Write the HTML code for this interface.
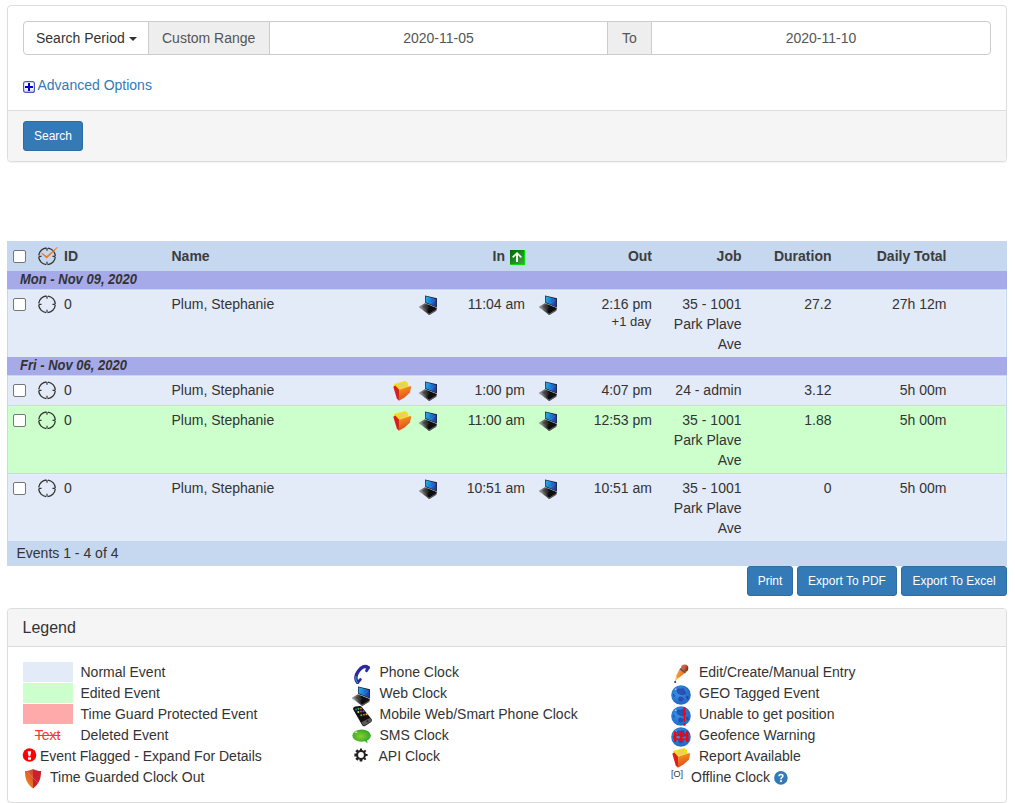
<!DOCTYPE html>
<html><head><meta charset="utf-8">
<style>
*{box-sizing:border-box;margin:0;padding:0}
html,body{width:1015px;height:803px;overflow:hidden;background:#fff}
body{font-family:"Liberation Sans",sans-serif;font-size:14px;color:#333;position:relative}
.a{position:absolute}
.t{position:absolute;white-space:nowrap;line-height:20px}
.r{text-align:right}
.b{font-weight:bold;color:#3c3c3c}
.panel{position:absolute;border:1px solid #ddd;border-radius:4px;background:#fff;box-shadow:0 1px 1px rgba(0,0,0,.05)}
.ig{position:absolute;top:21px;height:34px;border:1px solid #ccc;background:#fff}
.addon{background:#eee;color:#555}
.btn{position:absolute;background:#337ab7;border:1px solid #2e6da4;border-radius:3px;color:#fff;font-size:12px;line-height:28px;text-align:center}
.row{position:absolute;left:7px;width:1000px}
.hd{background:#c5d8ef}
.dt{background:#a6aae8}
.nm{background:#e3eaf8;border-left:1px solid #c5d8ef;border-right:1px solid #c5d8ef;border-top:1px solid #c5d8ef;box-shadow:inset 0 1px 0 rgba(255,255,255,.15),inset -1px 0 0 rgba(255,255,255,.15)}
.gr{background:#ccffcc;border-left:1px solid #c5d8ef;border-right:1px solid #c5d8ef;border-top:1px solid #c5d8ef;box-shadow:inset 0 1px 0 rgba(255,255,255,.15),inset -1px 0 0 rgba(255,255,255,.15)}
.cb{position:absolute;left:13px;width:13px;height:13px;border:1px solid #767676;border-radius:2px;background:#fff}
.dtt{position:absolute;left:20px;font-size:13px;font-weight:bold;font-style:italic;line-height:18px;white-space:nowrap;transform:scaleY(1.12);transform-origin:0 4px}
</style></head><body>

<svg width="0" height="0" style="position:absolute">
<defs>
<linearGradient id="scr" x1="0" y1="0" x2="1" y2="0.3"><stop offset="0" stop-color="#28b0ee"/><stop offset="0.45" stop-color="#1e88d8"/><stop offset="1" stop-color="#2040b0"/></linearGradient>
<linearGradient id="kb" x1="0" y1="0" x2="1" y2="0"><stop offset="0" stop-color="#a8a8a8"/><stop offset="0.35" stop-color="#555"/><stop offset="0.55" stop-color="#0a0a0a"/><stop offset="1" stop-color="#151515"/></linearGradient>
<linearGradient id="fold" x1="0" y1="0" x2="0.3" y2="1"><stop offset="0" stop-color="#f8a020"/><stop offset="1" stop-color="#e04818"/></linearGradient>
<linearGradient id="shl" x1="0" y1="1" x2="0.6" y2="0"><stop offset="0" stop-color="#f4a020"/><stop offset="1" stop-color="#d84a30"/></linearGradient>
<radialGradient id="glb" cx="0.4" cy="0.4" r="0.7"><stop offset="0" stop-color="#3a9ae8"/><stop offset="0.8" stop-color="#2468c8"/><stop offset="1" stop-color="#3a90e0"/></radialGradient>
<radialGradient id="sms" cx="0.45" cy="0.55" r="0.6"><stop offset="0" stop-color="#8acc30"/><stop offset="1" stop-color="#28a828"/></radialGradient>
<symbol id="clk" viewBox="0 0 20 20">
  <circle cx="9" cy="9.3" r="8.3" fill="none" stroke="#333" stroke-width="1.3" stroke-dasharray="11.538 1.5" stroke-dashoffset="12.288"/>
  <path d="M9 1v2.8M9 17.6v-2.8M0.7 9.3h2.8M17.3 9.3h-2.8" stroke="#333" stroke-width="1.2"/>
</symbol>
<symbol id="lap" viewBox="0 0 20 21">
  <path d="M7 1.5 L19 4.3 L18.9 13.6 L7.2 9Z" fill="#1a1a2a"/>
  <path d="M7.7 2.2 L18.3 5 L18.1 12.8 L7.8 8.3Z" fill="url(#scr)"/>
  <path d="M17.2 5.8 L10.5 10.8" stroke="#8ac8f8" stroke-opacity="0.45" stroke-width="0.5"/>
  <path d="M0.8 12.8 L6.7 9.2 L18.9 14 L18.2 16.8 L11.2 21 Z" fill="url(#kb)"/>
  <path d="M4 12.8 L7 11 L12 13.2 L9 15.5Z" fill="#333" fill-opacity="0.6"/>
  <path d="M1.6 14 L11.2 19.6 L18.4 15.3 L18.2 16.8 L11.2 21 L0.8 12.8Z" fill="#6a6a6a" fill-opacity="0.85"/>
</symbol>
<symbol id="fld" viewBox="0 0 19 20">
  <path d="M0.9 2.9 L12.1 -0.1 L14.8 1.7 L15.6 5.8 L6.2 8.8 L1.5 6Z" fill="#f8dc20"/>
  <path d="M5 3.6 L11.5 1.8 L12.8 5.2 L6.5 7.2Z" fill="#e8d060"/>
  <path d="M0.3 5.8 L2.3 4.6 L6.2 8.8 L5.9 19.7 L3.8 17.6Z" fill="#d8201c"/>
  <path d="M6.2 8.8 L17.4 4.9 L18.3 5.8 L16.8 11.7 L11.5 16.5 L5.9 19.7Z" fill="url(#fold)"/>
</symbol>
</defs></svg>
<!-- search panel -->
<div class="panel" style="left:7px;top:5px;width:1000px;height:157px">
  <div class="a" style="left:0;top:104px;width:998px;height:51px;background:#f5f5f5;border-top:1px solid #ddd;border-radius:0 0 3px 3px"></div>
</div>
<div class="ig" style="left:23px;width:126px;border-radius:4px 0 0 4px"></div>
<div class="t" style="left:36px;top:28px">Search Period</div>
<div class="a" style="left:129px;top:37px;width:0;height:0;border-top:4px solid #333;border-left:4px solid transparent;border-right:4px solid transparent"></div>
<div class="ig addon" style="left:148px;width:122px"></div>
<div class="t" style="left:162px;top:28px;color:#555">Custom Range</div>
<div class="ig" style="left:269px;width:339px"></div>
<div class="t" style="left:269px;top:28px;width:339px;text-align:center;color:#555">2020-11-05</div>
<div class="ig addon" style="left:607px;width:45px"></div>
<div class="t" style="left:607px;top:28px;width:45px;text-align:center;color:#555">To</div>
<div class="ig" style="left:651px;width:340px;border-radius:0 4px 4px 0"></div>
<div class="t" style="left:651px;top:28px;width:340px;text-align:center;color:#555">2020-11-10</div>

<svg class="a" style="left:23px;top:81px" width="12" height="12" viewBox="0 0 12 12">
  <defs><linearGradient id="pg" x1="0" y1="0" x2="0" y2="1"><stop offset="0.5" stop-color="#fff"/><stop offset="1" stop-color="#d8d8dc"/></linearGradient></defs><rect x="0.6" y="0.6" width="10.8" height="10.8" rx="2" fill="url(#pg)" stroke="#4a5cb8" stroke-width="1.2"/>
  <rect x="2" y="5" width="8" height="2" fill="#0000cc"/>
  <rect x="5" y="2" width="2" height="8" fill="#0000cc"/>
</svg>
<div class="t" style="left:37.5px;top:75px;color:#337ab7">Advanced Options</div>
<div class="btn" style="left:23px;top:121px;width:60px;height:30px">Search</div>

<!-- table -->
<div class="row hd" style="top:241px;height:30px"></div>
<div class="row dt" style="top:271px;height:18px"></div>
<div class="row nm" style="top:289px;height:68px"></div>
<div class="row dt" style="top:357px;height:18px"></div>
<div class="row nm" style="top:375px;height:30px"></div>
<div class="row gr" style="top:405px;height:68px"></div>
<div class="row nm" style="top:473px;height:68px"></div>
<div class="row hd" style="top:541px;height:25px"></div>

<!-- header -->
<div class="cb" style="top:250px"></div>
<div class="t b" style="left:64px;top:246px">ID</div>
<div class="t b" style="left:171.5px;top:246px">Name</div>
<div class="t b r" style="right:510px;top:246px">In</div>
<div class="t b r" style="right:363px;top:246px">Out</div>
<div class="t b r" style="right:273.5px;top:246px">Job</div>
<div class="t b r" style="right:183.5px;top:246px">Duration</div>
<div class="t b r" style="right:68.5px;top:246px">Daily Total</div>

<div class="dtt" style="top:270px">Mon - Nov 09, 2020</div>
<div class="dtt" style="top:356px">Fri - Nov 06, 2020</div>

<!-- rows -->
<div class="cb" style="top:298px"></div>
<div class="t" style="left:64px;top:294px">0</div>
<div class="t" style="left:171.5px;top:294px">Plum, Stephanie</div>
<div class="t r" style="right:490px;top:294px">11:04 am</div>
<div class="t r" style="right:363px;top:294px">2:16 pm</div>
<div class="t r" style="right:364px;top:312px;font-size:13px">+1 day</div>
<div class="t r" style="right:273.5px;top:294px">35 - 1001<br>Park Plave<br>Ave</div>
<div class="t r" style="right:183.5px;top:294px">27.2</div>
<div class="t r" style="right:68.5px;top:294px">27h 12m</div>

<div class="cb" style="top:384px"></div>
<div class="t" style="left:64px;top:380px">0</div>
<div class="t" style="left:171.5px;top:380px">Plum, Stephanie</div>
<div class="t r" style="right:490px;top:380px">1:00 pm</div>
<div class="t r" style="right:363px;top:380px">4:07 pm</div>
<div class="t r" style="right:273.5px;top:380px">24 - admin</div>
<div class="t r" style="right:183.5px;top:380px">3.12</div>
<div class="t r" style="right:68.5px;top:380px">5h 00m</div>

<div class="cb" style="top:414px"></div>
<div class="t" style="left:64px;top:410px">0</div>
<div class="t" style="left:171.5px;top:410px">Plum, Stephanie</div>
<div class="t r" style="right:490px;top:410px">11:00 am</div>
<div class="t r" style="right:363px;top:410px">12:53 pm</div>
<div class="t r" style="right:273.5px;top:410px">35 - 1001<br>Park Plave<br>Ave</div>
<div class="t r" style="right:183.5px;top:410px">1.88</div>
<div class="t r" style="right:68.5px;top:410px">5h 00m</div>

<div class="cb" style="top:482px"></div>
<div class="t" style="left:64px;top:478px">0</div>
<div class="t" style="left:171.5px;top:478px">Plum, Stephanie</div>
<div class="t r" style="right:490px;top:478px">10:51 am</div>
<div class="t r" style="right:363px;top:478px">10:51 am</div>
<div class="t r" style="right:273.5px;top:478px">35 - 1001<br>Park Plave<br>Ave</div>
<div class="t r" style="right:183.5px;top:478px">0</div>
<div class="t r" style="right:68.5px;top:478px">5h 00m</div>

<div class="t" style="left:16.5px;top:543px">Events 1 - 4 of 4</div>

<div class="btn" style="left:747px;top:566px;width:46px;height:30px">Print</div>
<div class="btn" style="left:797px;top:566px;width:100px;height:30px">Export To PDF</div>
<div class="btn" style="left:901px;top:566px;width:106px;height:30px">Export To Excel</div>

<!-- icons -->
<svg class="a" style="left:38px;top:247px" width="20" height="20"><use href="#clk"/><path d="M3.2 6.6 L8.8 11.5 L19.8 0.6 L19.2 0 L8.7 9.1 L3.9 5.7 Z" fill="#f07820"/></svg>
<svg class="a" style="left:510px;top:250px" width="15" height="15" viewBox="0 0 15 15"><defs><linearGradient id="sg" x1="0" y1="0" x2="1" y2="1"><stop offset="0" stop-color="#006800"/><stop offset="0.6" stop-color="#229022"/><stop offset="1" stop-color="#4aa04a"/></linearGradient></defs><rect width="15" height="15" fill="#00e000"/><rect width="14" height="14" fill="url(#sg)"/><path d="M7 1.9 L2.1 6.8 L3.2 7.9 L6 5.2 V12 H8 V5.2 L10.8 7.9 L11.9 6.8 Z" fill="#fff"/></svg>
<svg class="a" style="left:38px;top:295px" width="20" height="20"><use href="#clk"/></svg>
<svg class="a" style="left:38px;top:381px" width="20" height="20"><use href="#clk"/></svg>
<svg class="a" style="left:38px;top:411px" width="20" height="20"><use href="#clk"/></svg>
<svg class="a" style="left:38px;top:479px" width="20" height="20"><use href="#clk"/></svg>
<svg class="a" style="left:418px;top:294px" width="20" height="21"><use href="#lap"/></svg>
<svg class="a" style="left:538px;top:294px" width="20" height="21"><use href="#lap"/></svg>
<svg class="a" style="left:418px;top:380px" width="20" height="21"><use href="#lap"/></svg>
<svg class="a" style="left:538px;top:380px" width="20" height="21"><use href="#lap"/></svg>
<svg class="a" style="left:418px;top:410px" width="20" height="21"><use href="#lap"/></svg>
<svg class="a" style="left:538px;top:410px" width="20" height="21"><use href="#lap"/></svg>
<svg class="a" style="left:418px;top:478px" width="20" height="21"><use href="#lap"/></svg>
<svg class="a" style="left:538px;top:478px" width="20" height="21"><use href="#lap"/></svg>
<svg class="a" style="left:393px;top:381px" width="19" height="20"><use href="#fld"/></svg>
<svg class="a" style="left:393px;top:411px" width="19" height="20"><use href="#fld"/></svg>
<!-- legend -->
<div class="panel" style="left:7px;top:608px;width:1000px;height:195px">
  <div class="a" style="left:0;top:0;width:998px;height:38px;background:#f5f5f5;border-bottom:1px solid #ddd;border-radius:3px 3px 0 0"></div>
</div>
<div class="t" style="left:22.5px;top:618px;font-size:16px;line-height:20px">Legend</div>

<div class="a" style="left:23px;top:662px;width:50px;height:20px;background:#e3eaf8"></div>
<div class="a" style="left:23px;top:683px;width:50px;height:20px;background:#ccffcc"></div>
<div class="a" style="left:23px;top:704px;width:50px;height:20px;background:#ffaaaa"></div>
<div class="t" style="left:80.5px;top:662px">Normal Event</div>
<div class="t" style="left:80.5px;top:683px">Edited Event</div>
<div class="t" style="left:80.5px;top:704px">Time Guard Protected Event</div>
<div class="t" style="left:34.75px;top:725px;color:#f33;text-decoration:line-through">Text</div>
<div class="t" style="left:80.5px;top:725px">Deleted Event</div>
<div class="t" style="left:40px;top:746px">Event Flagged - Expand For Details</div>
<div class="t" style="left:50px;top:767px">Time Guarded Clock Out</div>

<div class="t" style="left:379.5px;top:662px">Phone Clock</div>
<div class="t" style="left:379.5px;top:683px">Web Clock</div>
<div class="t" style="left:379.5px;top:704px">Mobile Web/Smart Phone Clock</div>
<div class="t" style="left:379.5px;top:725px">SMS Clock</div>
<div class="t" style="left:378.5px;top:746px">API Clock</div>

<div class="t" style="left:699px;top:662px">Edit/Create/Manual Entry</div>
<div class="t" style="left:699px;top:683px">GEO Tagged Event</div>
<div class="t" style="left:699px;top:704px">Unable to get position</div>
<div class="t" style="left:699px;top:725px">Geofence Warning</div>
<div class="t" style="left:699px;top:746px">Report Available</div>
<div class="t" style="left:691px;top:767px">Offline Clock</div>

<!-- legend icons -->
<svg class="a" style="left:22px;top:748px" width="15" height="15" viewBox="0 0 15 15"><circle cx="7.5" cy="7" r="6.8" fill="#f00"/><path d="M5.6 3.3 H9.2 L8.2 8.2 H6.6 Z" fill="#fff"/><rect x="6" y="9.3" width="3" height="2.4" fill="#fff"/></svg>
<svg class="a" style="left:24px;top:768px" width="18" height="21" viewBox="0 0 18 21"><path d="M9 1 C6 2.5 3.5 3 1 3 C0.8 11 3 16 9 20.5 Z" fill="url(#shl)"/><path d="M9 1 C12 2.5 14.5 3 17 3 C17.2 11 15 16 9 20.5 Z" fill="#c82232"/><path d="M3 4 L15 16" stroke="#f8c0a0" stroke-opacity="0.35" stroke-width="0.8"/></svg>
<svg class="a" style="left:352px;top:664px" width="20" height="20" viewBox="0 0 20 20"><path d="M16 3.6 C13 1.2 9.5 3 6.5 7 C3.5 11 3 15 5.5 18.3" fill="none" stroke="#2a2a9c" stroke-width="3.4" stroke-linecap="round"/><path d="M16.5 3.5 L14.5 6.8" stroke="#2a2a9c" stroke-width="2.8" stroke-linecap="round"/><path d="M5.8 18.3 L8.3 15.6" stroke="#2a2a9c" stroke-width="2.8" stroke-linecap="round"/><path d="M4 12.5 C3.5 15 4 17 5.5 18.6" fill="none" stroke="#38b0f0" stroke-width="1" stroke-linecap="round"/></svg>
<svg class="a" style="left:351px;top:685px" width="20" height="21"><use href="#lap"/></svg>
<svg class="a" style="left:352px;top:706px" width="21" height="21" viewBox="0 0 21 21"><path d="M1.2 3.5 C0.8 2 1.8 0.8 3.5 0.5 L7.5 0 C8.5 -0.1 9.3 0.3 9.8 1.1 L19.5 13 C20.3 14.2 19.8 15.5 18.5 16.5 L13 20 C11.8 20.6 10.8 20.3 10.2 19.3 Z" fill="#111"/><path d="M9.5 16.2 L17.8 12 L19.3 13.6 C19.8 14.5 19.3 15.4 18.3 16.1 L13 19.3 C12 19.8 11.2 19.6 10.7 18.8 Z" fill="#5a5a5a"/><circle cx="15.5" cy="15.2" r="1" fill="#222"/><circle cx="4" cy="3.5" r="1" fill="#3070e0"/><circle cx="6.5" cy="2.8" r="1" fill="#50c040"/><circle cx="9" cy="2.4" r="1" fill="#e06030"/><circle cx="6.3" cy="6" r="1" fill="#e0e030"/><circle cx="9" cy="5.5" r="1" fill="#a040d0"/><circle cx="11.5" cy="5.2" r="1" fill="#3070e0"/><circle cx="9.3" cy="9.2" r="1" fill="#50c040"/><circle cx="12" cy="8.7" r="1" fill="#e06030"/><circle cx="14.5" cy="8.3" r="1" fill="#e0c030"/></svg>
<svg class="a" style="left:352px;top:729px" width="20" height="16" viewBox="0 0 20 16"><ellipse cx="9.6" cy="6.6" rx="9.3" ry="6.2" fill="url(#sms)"/><path d="M12 11 L15.5 14.5 L15 10.5 Z" fill="#30a830"/><ellipse cx="4" cy="3.3" rx="1.6" ry="0.8" fill="#d0f080"/></svg>
<svg class="a" style="left:354px;top:748px" width="14" height="14" viewBox="0 0 14 14"><g fill="#222"><circle cx="7" cy="7" r="4.9"/><path d="M6 0.4 H8 L8.4 13.6 H5.6 Z" transform="rotate(0 7 7)"/><path d="M6 0.4 H8 L8.4 13.6 H5.6 Z" transform="rotate(45 7 7)"/><path d="M6 0.4 H8 L8.4 13.6 H5.6 Z" transform="rotate(90 7 7)"/><path d="M6 0.4 H8 L8.4 13.6 H5.6 Z" transform="rotate(135 7 7)"/></g><circle cx="7" cy="7" r="2.9" fill="#fff"/></svg>
<svg class="a" style="left:673px;top:664px" width="17" height="20" viewBox="0 0 17 20"><defs><linearGradient id="pb" x1="0" y1="0" x2="1" y2="0.3"><stop offset="0" stop-color="#f8b040"/><stop offset="1" stop-color="#f06a20"/></linearGradient><linearGradient id="er" x1="0" y1="0" x2="1" y2="0.4"><stop offset="0" stop-color="#e07060"/><stop offset="0.6" stop-color="#c85a3a"/><stop offset="1" stop-color="#7a3010"/></linearGradient></defs><path d="M3 12 L4.6 14.8 L1.8 18.6 Z" fill="#f4c060"/><path d="M6.6 4.9 L11.9 9 L4.6 14.8 L3 12 Z" fill="url(#pb)"/><circle cx="2.1" cy="18.1" r="1" fill="#333"/><circle cx="11.6" cy="4.2" r="3.7" fill="url(#er)"/><path d="M7 4.6 L12.5 9" stroke="#555" stroke-width="1.6"/></svg>
<svg class="a" style="left:671px;top:685px" width="20" height="20" viewBox="0 0 20 20"><circle cx="10" cy="10" r="9.8" fill="url(#glb)"/><g fill="#2838a0" opacity="0.7"><path d="M6 4 C8 3 10 4 12 3 C14 4 13 6 15 7 C16 9 14 10 12 10 C10 11 9 9 7 9 C6 8 5 6 6 4Z"/><path d="M8 12 C10 11 12 12 13 14 C12 16 10 17 8 16 C7 15 7 13 8 12Z"/><path d="M15 11 C17 10 18 12 17.5 14 C16 15 15 13 15 11Z"/><path d="M2 9 C3 8 4 10 3.5 12 C2.5 12 2 11 2 9Z"/></g><path d="M3.5 4.5 L5 3.2 L5.5 4.8Z" fill="#e0f0ff"/></svg>
<svg class="a" style="left:671px;top:706px" width="20" height="20" viewBox="0 0 20 20"><circle cx="10" cy="10" r="9.8" fill="url(#glb)"/><g fill="#2838a0" opacity="0.7"><path d="M6 4 C8 3 10 4 12 3 C14 4 13 6 15 7 C16 9 14 10 12 10 C10 11 9 9 7 9 C6 8 5 6 6 4Z"/><path d="M8 12 C10 11 12 12 13 14 C12 16 10 17 8 16 C7 15 7 13 8 12Z"/><path d="M15 11 C17 10 18 12 17.5 14 C16 15 15 13 15 11Z"/><path d="M2 9 C3 8 4 10 3.5 12 C2.5 12 2 11 2 9Z"/></g><path d="M3.5 4.5 L5 3.2 L5.5 4.8Z" fill="#e0f0ff"/><path d="M12.1 1.6 H14.7 L14 15.8 H12.8 Z" fill="#f00"/><circle cx="13.4" cy="18.4" r="1.3" fill="#f00"/></svg>
<svg class="a" style="left:671px;top:727px" width="20" height="20" viewBox="0 0 20 20"><circle cx="10" cy="10" r="9.8" fill="url(#glb)"/><g fill="#2838a0" opacity="0.7"><path d="M6 4 C8 3 10 4 12 3 C14 4 13 6 15 7 C16 9 14 10 12 10 C10 11 9 9 7 9 C6 8 5 6 6 4Z"/><path d="M8 12 C10 11 12 12 13 14 C12 16 10 17 8 16 C7 15 7 13 8 12Z"/><path d="M15 11 C17 10 18 12 17.5 14 C16 15 15 13 15 11Z"/><path d="M2 9 C3 8 4 10 3.5 12 C2.5 12 2 11 2 9Z"/></g><path d="M3.5 4.5 L5 3.2 L5.5 4.8Z" fill="#e0f0ff"/><g fill="#f00"><rect x="3" y="5" width="2.4" height="10"/><rect x="9" y="5" width="2.4" height="10"/><rect x="15" y="5" width="2.4" height="10"/><rect x="3" y="7.5" width="14" height="1.4"/><rect x="3" y="11.5" width="14" height="1.4"/><path d="M3 5 L4.2 3.5 L5.4 5Z M9 5 L10.2 3.5 L11.4 5Z M15 5 L16.2 3.5 L17.4 5Z"/></g></svg>
<svg class="a" style="left:672px;top:748px" width="19" height="20"><use href="#fld"/></svg>
<div class="a" style="left:671px;top:769px;font-size:9px;line-height:11px;color:#333">[O]</div>
<svg class="a" style="left:774px;top:771px" width="14" height="14" viewBox="0 0 14 14"><circle cx="6.9" cy="6.9" r="6.8" fill="#337ab7"/><path d="M4.3 5.2 C4.3 3.6 5.5 2.8 7 2.8 C8.6 2.8 9.7 3.7 9.7 5 C9.7 6.5 7.8 6.7 7.8 8.2 H6.2 C6.2 6.2 8 6 8 5 C8 4.5 7.6 4.2 7 4.2 C6.3 4.2 5.9 4.6 5.9 5.2 Z" fill="#fff"/><rect x="6.1" y="9.2" width="1.8" height="1.8" fill="#fff"/></svg>
</body></html>
